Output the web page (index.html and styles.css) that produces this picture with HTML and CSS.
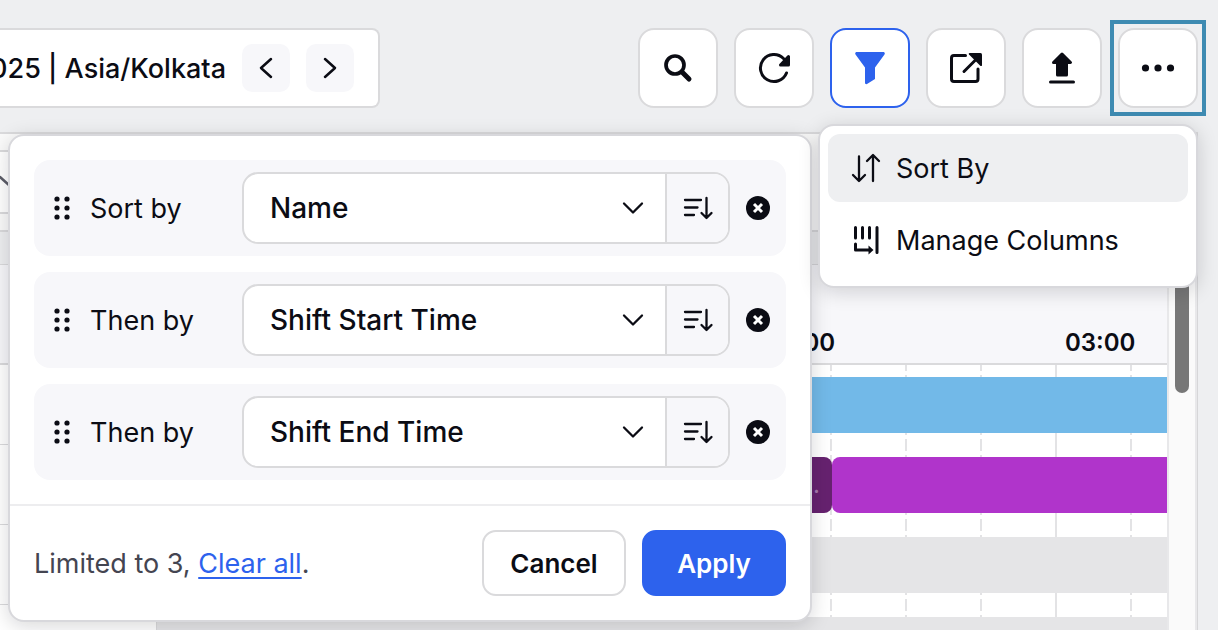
FILE: index.html
```
<!DOCTYPE html>
<html lang="en">
<head>
    <meta charset="utf-8">
    <title>Shift Schedule</title>
    <meta name="viewport" content="width=device-width, initial-scale=1.0">
    <link rel="stylesheet" href="styles.css">
</head>
<body>
    <header class="topbar">
        <div class="date-nav">
            <span class="date-text">2025 | Asia/Kolkata</span>
            <button type="button" class="nav-btn" aria-label="Previous">
                <svg width="24" height="24" viewBox="0 0 24 24"><path d="M17 3L7 12l10 9" class="line"/></svg>
            </button>
            <button type="button" class="nav-btn" aria-label="Next">
                <svg width="24" height="24" viewBox="0 0 24 24"><path d="M7 3l10 9-10 9" class="line"/></svg>
            </button>
        </div>

        <div class="actions">
            <button type="button" class="icon-btn" aria-label="Search">
                <svg width="32" height="32" viewBox="0 0 32 32"><circle cx="13" cy="13" r="9" class="line w4"/><path d="M20 20l7 7" class="line w5"/></svg>
            </button>
            <button type="button" class="icon-btn" aria-label="Refresh">
                <svg width="32" height="32" viewBox="0 0 32 32"><path d="M28.500 21A13.500 13.500 0 1 1 25.500 6.500" class="line w3"/><path d="M30.500 4.500v8.500h-8z" class="solid"/></svg>
            </button>
            <button type="button" class="icon-btn active" aria-label="Filter">
                <svg width="32" height="32" viewBox="0 0 32 32"><path d="M2 0h28q1.500 1 .5 2.500L21 15.500V27l-8 5q-2 .5-2-1V15.500L1.500 2.500Q.5 1 2 0z" fill="currentColor"/></svg>
            </button>
            <button type="button" class="icon-btn" aria-label="Open in new window">
                <svg width="32" height="32" viewBox="0 0 32 32"><path d="M15.500 3.500H4q-2.500 0-2.500 2.500v21q0 2.500 2.500 2.500h21.500q2.500 0 2.500-2.500V17" class="line w3"/><path d="M14 19.500L26 7.500" class="line w3"/><path d="M19.500 1h11q1.500 0 1.500 1.500v11q-1 1-2 0l-11-11q-1-1 .5-1.500z" fill="currentColor"/></svg>
            </button>
            <button type="button" class="icon-btn" aria-label="Upload">
                <svg width="32" height="32" viewBox="0 0 32 32"><path d="M16 2l8.500 8.500H20.500V23h-9V10.500H7.500z" class="solid"/><path d="M4.500 30h23" class="line w3"/></svg>
            </button>
            <span class="focus-box">
                <button type="button" class="icon-btn" aria-label="More">
                    <svg width="32" height="32" viewBox="0 0 32 32"><circle cx="3.500" cy="16" r="3.600"/><circle cx="16" cy="16" r="3.600"/><circle cx="28.500" cy="16" r="3.600"/></svg>
                </button>
            </span>
        </div>
    </header>

    <main class="board">
        <div class="toolbar">
            <button type="button" class="view-picker" aria-label="Choose view">
                <svg width="20" height="12" viewBox="0 0 20 12"><path d="M0 1l10 9 9-9" class="line"/></svg>
            </button>
        </div>
        <div class="day-band"></div>
        <div class="schedule">
            <div class="people">
                <div class="people-head"></div>
                <div class="person"></div>
                <div class="person"></div>
                <div class="person"></div>
                <div class="person"></div>
            </div>
            <div class="timeline">
                <div class="hours">
                    <span></span>
                    <span></span>
                    <span>02:00</span>
                    <span>03:00</span>
                </div>
                <div class="tracks">
                    <div class="track"><div class="bar blue"></div></div>
                    <div class="track">
                        <div class="bar plum">...</div>
                        <div class="bar purple"></div>
                    </div>
                    <div class="track"><div class="bar off"></div></div>
                    <div class="track"><div class="bar off"></div></div>
                </div>
            </div>
            <div class="scroll"><div class="thumb"></div></div>
        </div>
    </main>

    <form class="sort-panel">
        <div class="sort-rows">
            <div class="sort-row">
                <svg class="drag" width="16" height="24" viewBox="0 0 16 24"><circle cx="3" cy="3" r="2.600"/><circle cx="13" cy="3" r="2.600"/><circle cx="3" cy="12" r="2.600"/><circle cx="13" cy="12" r="2.600"/><circle cx="3" cy="21" r="2.600"/><circle cx="13" cy="21" r="2.600"/></svg>
                <label for="sort1">Sort by</label>
                <div class="field">
                    <select id="sort1"><option>Name</option><option>Shift Start Time</option><option>Shift End Time</option></select>
                    <svg class="caret" width="24" height="24" viewBox="0 0 24 24"><path d="M3 7.500l9 9 9-9" class="line w2"/></svg>
                    <button type="button" class="order" aria-label="Sort order">
                        <svg width="32" height="28" viewBox="0 0 32 28"><path d="M3 6h16M3 13.500h12.500M3 21h9M24.500 4v20M19.500 19l5 5 5-5" class="line w2"/></svg>
                    </button>
                </div>
                <button type="button" class="remove" aria-label="Remove">
                    <svg width="24" height="24" viewBox="0 0 24 24"><circle cx="12" cy="12" r="12"/><path d="M8 8l8 8M16 8l-8 8" class="cross"/></svg>
                </button>
            </div>
            <div class="sort-row">
                <svg class="drag" width="16" height="24" viewBox="0 0 16 24"><circle cx="3" cy="3" r="2.600"/><circle cx="13" cy="3" r="2.600"/><circle cx="3" cy="12" r="2.600"/><circle cx="13" cy="12" r="2.600"/><circle cx="3" cy="21" r="2.600"/><circle cx="13" cy="21" r="2.600"/></svg>
                <label for="sort2">Then by</label>
                <div class="field">
                    <select id="sort2"><option>Shift Start Time</option><option>Name</option><option>Shift End Time</option></select>
                    <svg class="caret" width="24" height="24" viewBox="0 0 24 24"><path d="M3 7.500l9 9 9-9" class="line w2"/></svg>
                    <button type="button" class="order" aria-label="Sort order">
                        <svg width="32" height="28" viewBox="0 0 32 28"><path d="M3 6h16M3 13.500h12.500M3 21h9M24.500 4v20M19.500 19l5 5 5-5" class="line w2"/></svg>
                    </button>
                </div>
                <button type="button" class="remove" aria-label="Remove">
                    <svg width="24" height="24" viewBox="0 0 24 24"><circle cx="12" cy="12" r="12"/><path d="M8 8l8 8M16 8l-8 8" class="cross"/></svg>
                </button>
            </div>
            <div class="sort-row">
                <svg class="drag" width="16" height="24" viewBox="0 0 16 24"><circle cx="3" cy="3" r="2.600"/><circle cx="13" cy="3" r="2.600"/><circle cx="3" cy="12" r="2.600"/><circle cx="13" cy="12" r="2.600"/><circle cx="3" cy="21" r="2.600"/><circle cx="13" cy="21" r="2.600"/></svg>
                <label for="sort3">Then by</label>
                <div class="field">
                    <select id="sort3"><option>Shift End Time</option><option>Name</option><option>Shift Start Time</option></select>
                    <svg class="caret" width="24" height="24" viewBox="0 0 24 24"><path d="M3 7.500l9 9 9-9" class="line w2"/></svg>
                    <button type="button" class="order" aria-label="Sort order">
                        <svg width="32" height="28" viewBox="0 0 32 28"><path d="M3 6h16M3 13.500h12.500M3 21h9M24.500 4v20M19.500 19l5 5 5-5" class="line w2"/></svg>
                    </button>
                </div>
                <button type="button" class="remove" aria-label="Remove">
                    <svg width="24" height="24" viewBox="0 0 24 24"><circle cx="12" cy="12" r="12"/><path d="M8 8l8 8M16 8l-8 8" class="cross"/></svg>
                </button>
            </div>
        </div>
        <div class="sort-footer">
            <p>Limited to 3, <a href="#">Clear all</a>.</p>
            <button type="button" class="btn">Cancel</button>
            <button type="submit" class="btn primary">Apply</button>
        </div>
    </form>

    <nav class="more-menu">
        <button type="button" class="menu-item selected">
            <svg width="28" height="28" viewBox="0 0 28 28"><path d="M7 2.500V27M1 21l6 6 6-6M21 27V1.500M15 7l6-6 6 6" class="line w2"/></svg>
            Sort By
        </button>
        <button type="button" class="menu-item">
            <svg width="28" height="28" viewBox="0 0 28 28"><path d="M3.500 1.500v10.500M10.500 1.500v10.500M17.500 1.500v10.500M25 1.500v25M3.500 18v6h14" class="line w3"/><path d="M16.500 19.500l5 4.500-5 4.500z"/></svg>
            Manage Columns
        </button>
    </nav>
</body>
</html>
```
FILE: styles.css
```
* {
    box-sizing: border-box;
}
body {
    margin: 0;
    height: 100vh;
    overflow: hidden;
    display: flex;
    flex-direction: column;
    position: relative;
    background: #eeeff1;
    color: #0b0c14;
    font-family: Inter, sans-serif;
    font-size: 27px;
}
button, select {
    font: inherit;
    color: inherit;
    margin: 0;
    padding: 0;
    border: none;
    background: none;
}
svg {
    display: block;
    flex: none;
    overflow: visible;
    fill: currentColor;
}

/* icon strokes */
.line {
    fill: none;
    stroke: currentColor;
    stroke-width: 2.5;
    stroke-linecap: round;
    stroke-linejoin: round;
}
.w2 { stroke-width: 2.3; }
.w3 { stroke-width: 3; }
.w4 { stroke-width: 3.7; }
.w5 { stroke-width: 5; }
.solid {
    fill: currentColor;
    stroke: currentColor;
    stroke-width: 3;
    stroke-linejoin: round;
}
.cross {
    stroke: #fff;
    stroke-width: 3;
}

/* top bar */
.topbar {
    display: flex;
    justify-content: space-between;
    padding: 28px 20px 24px 0;
}
.date-nav {
    display: flex;
    align-items: center;
    justify-content: flex-end;
    gap: 16px;
    width: 380px;
    height: 80px;
    padding-right: 24px;
    background: #fff;
    border: 2px solid #dadadc;
    border-left: none;
    border-radius: 0 8px 8px 0;
}
.date-text {
    white-space: nowrap;
    font-weight: 500;
}
.nav-btn {
    display: flex;
    align-items: center;
    justify-content: center;
    flex: none;
    width: 48px;
    height: 48px;
    border-radius: 10px;
    background: #f7f7fa;
}
.actions {
    display: flex;
    gap: 16px;
}
.icon-btn {
    display: flex;
    align-items: center;
    justify-content: center;
    width: 80px;
    height: 80px;
    background: #fff;
    border: 2px solid #dadadc;
    border-radius: 16px;
}
.icon-btn.active {
    color: #2d62ed;
    border-color: #2d62ed;
}
.focus-box {
    outline: 4px solid #3e8bb2;
    outline-offset: 4px;
    height: 80px;
}

/* schedule board */
.board {
    flex: 1;
    min-height: 0;
    overflow: hidden;
    display: flex;
    flex-direction: column;
    margin-right: 20px;
    background: #fafafa;
    border-top: 2px solid #dadadc;
    border-right: 1px solid #d6d6d8;
}
.toolbar {
    padding: 16px 0;
    border-bottom: 2px solid #dadadc;
}
.view-picker {
    display: flex;
    align-items: center;
    width: 300px;
    height: 64px;
    color: #5c5d68;
    background: #fff;
    border: 2px solid #dadadc;
    border-left: none;
}
.day-band {
    flex: none;
    height: 33px;
    background: #eeeff1;
    border-bottom: 1px solid #dadadc;
}
.schedule {
    flex: 1;
    min-height: 0;
    display: flex;
}
.people {
    width: 157px;
    flex: none;
    border-right: 1px solid #dadadc;
}
.people-head {
    height: 100px;
    background: #f7f7fa;
    border-bottom: 2px solid #dadadc;
}
.person {
    height: 80px;
    background: #fff;
    border-bottom: 1px solid #dadadc;
}
.timeline {
    flex: 1;
    min-width: 0;
    overflow: hidden;
}
.hours {
    display: flex;
    align-items: flex-end;
    height: 100px;
    padding-bottom: 5px;
    background: #f7f7fa;
    border-bottom: 2px solid #dadadc;
    font-size: 24px;
    line-height: 30px;
    font-weight: 600;
}
.hours span {
    flex: 0 0 300px;
    padding-left: 8px;
}
/* solid line on the hour, dashed line every 15 minutes */
.tracks {
    background:
        linear-gradient(to right, #e3e3e5 2px, transparent 2px) -2px 0 / 300px 100%,
        linear-gradient(#fff 4px, transparent 4px) 0 6px / 100% 16px,
        linear-gradient(to right, #e3e3e5 2px, transparent 2px) -2px 0 / 75px 100%,
        #fff;
}
.track {
    display: flex;
    height: 80px;
    padding: 12px 0;
}
.bar {
    flex: 1;
}
.blue { background: #72b9e8; }
.plum {
    flex: 0 0 675px;
    padding: 16px 12px 0 0;
    text-align: right;
    font-size: 24px;
    line-height: 24px;
    color: #a57aad;
    background: #66226f;
    border-radius: 8px;
}
.purple {
    background: #b034cb;
    border-radius: 8px 0 0 8px;
}
.off { background: #e5e5e7; }
.scroll {
    flex: none;
    width: 30px;
    padding-left: 6px;
    border-left: 2px solid #e8e8ea;
    border-right: 2px solid #e8e8ea;
}
.thumb {
    width: 14px;
    height: 128px;
    background: #777;
    border-radius: 7px;
}

/* sort panel */
.sort-panel {
    position: absolute;
    left: 8px;
    top: 134px;
    width: 804px;
    background: #fff;
    border: 2px solid #d8d8dc;
    border-radius: 16px;
    box-shadow: 0 4px 20px rgba(11, 12, 20, 0.16);
}
.sort-rows {
    display: flex;
    flex-direction: column;
    gap: 16px;
    padding: 24px;
}
.sort-row {
    display: flex;
    align-items: center;
    padding: 12px 16px 12px 20px;
    background: #f7f7fa;
    border-radius: 16px;
}
.sort-row label {
    width: 152px;
    margin-left: 20px;
}
.field {
    flex: 1;
    display: flex;
    align-items: center;
    height: 72px;
    margin-right: 16px;
    overflow: hidden;
    background: #fff;
    border: 2px solid #dadadc;
    border-radius: 16px;
}
.field select {
    flex: 1;
    height: 100%;
    padding: 0 60px 0 26px;
    appearance: none;
    font-size: 28px;
    font-weight: 500;
}
.caret {
    margin-left: -44px;
    margin-right: 20px;
    pointer-events: none;
}
.order {
    display: flex;
    align-items: center;
    justify-content: center;
    width: 63px;
    height: 100%;
    background: #f7f7fa;
    border-left: 2px solid #dadadc;
}
.sort-footer {
    display: flex;
    align-items: center;
    gap: 16px;
    padding: 24px;
    border-top: 2px solid #ededef;
}
.sort-footer p {
    flex: 1;
    margin: 0;
    color: #444551;
}
.sort-footer a {
    color: #2d62ed;
    text-decoration-thickness: 2px;
    text-underline-offset: 4px;
}
.btn {
    width: 144px;
    height: 66px;
    font-size: 26px;
    font-weight: 600;
    background: #fff;
    border: 2px solid #dadadc;
    border-radius: 14px;
}
.btn.primary {
    color: #fff;
    background: #2d62ed;
    border-color: #2d62ed;
}

/* more menu */
.more-menu {
    position: absolute;
    right: 20px;
    top: 124px;
    width: 380px;
    display: flex;
    flex-direction: column;
    gap: 4px;
    padding: 8px 8px 12px;
    background: #fff;
    border: 2px solid #d8d8dc;
    border-radius: 16px;
    box-shadow: 0 4px 20px rgba(11, 12, 20, 0.16);
}
.menu-item {
    display: flex;
    align-items: center;
    gap: 16px;
    height: 68px;
    padding: 0 24px;
    border-radius: 12px;
}
.menu-item.selected {
    background: #eeeff1;
}
```
